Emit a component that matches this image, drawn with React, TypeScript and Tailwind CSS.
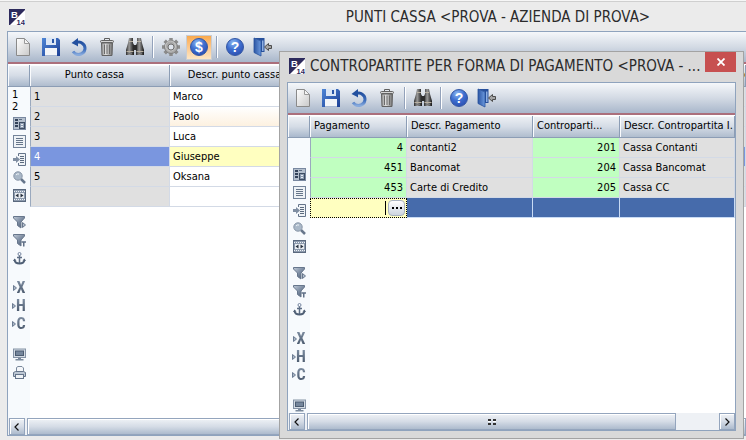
import type { ReactNode } from "react";

const UI_FONT = "font-['DejaVu_Sans_Condensed','DejaVu_Sans',sans-serif]";

function Gradients() {
  return (
    <svg className="absolute size-0" aria-hidden="true">
      <defs>
        <linearGradient id="paper" x1="0" y1="0" x2="1" y2="1">
          <stop offset="0" stopColor="#ffffff" />
          <stop offset="1" stopColor="#c9c9c9" />
        </linearGradient>
        <linearGradient id="blue" x1="0" y1="0" x2="1" y2="1">
          <stop offset="0" stopColor="#4f86d6" />
          <stop offset="1" stopColor="#1c3f95" />
        </linearGradient>
        <linearGradient id="swirl" x1="0" y1="0" x2="0" y2="1">
          <stop offset="0" stopColor="#23509f" />
          <stop offset="0.6" stopColor="#3f6fbd" />
          <stop offset="1" stopColor="#86a9dc" />
        </linearGradient>
        <linearGradient id="leaf" x1="0" y1="0" x2="1" y2="0">
          <stop offset="0" stopColor="#2c56a4" />
          <stop offset="1" stopColor="#6c9ade" />
        </linearGradient>
        <radialGradient id="ball" cx="0.4" cy="0.25" r="0.8">
          <stop offset="0" stopColor="#8db8f2" />
          <stop offset="0.5" stopColor="#3f6fd0" />
          <stop offset="1" stopColor="#2a4db0" />
        </radialGradient>
        <linearGradient id="metal" x1="0" y1="0" x2="1" y2="0">
          <stop offset="0" stopColor="#8f8f8f" />
          <stop offset="0.4" stopColor="#e2e2e2" />
          <stop offset="1" stopColor="#6e6e6e" />
        </linearGradient>
        <linearGradient id="slate" x1="0" y1="0" x2="1" y2="1">
          <stop offset="0" stopColor="#c2ccd9" />
          <stop offset="0.5" stopColor="#7c8ca2" />
          <stop offset="1" stopColor="#44546a" />
        </linearGradient>
        <linearGradient id="lens" x1="0" y1="0" x2="1" y2="0">
          <stop offset="0" stopColor="#2b2b2b" />
          <stop offset="0.4" stopColor="#9a9a9a" />
          <stop offset="1" stopColor="#151515" />
        </linearGradient>
      </defs>
    </svg>
  );
}

function Logo() {
  return (
    <svg viewBox="0 0 16 16" className="size-4 shrink-0" aria-hidden="true">
      <rect width="16" height="16" fill="#fff" />
      <path d="M0 0H16V1L1 16H0Z" fill="#2d2a5c" />
      <text x="2" y="8.5" fontSize="9.5" fontWeight="700" fill="#fff" fontFamily="Liberation Sans, sans-serif">B</text>
      <text x="7.5" y="15.5" fontSize="7.5" fontWeight="700" fill="#2d2a5c" fontFamily="Liberation Sans, sans-serif">14</text>
    </svg>
  );
}

function Big({ children }: { children: ReactNode }) {
  return (
    <svg viewBox="0 0 20 20" className="size-5" aria-hidden="true">
      {children}
    </svg>
  );
}

const NewIcon = () => (
  <Big>
    <path d="M3.500 1.500H11.500L16.500 6.500V18.500H3.500Z" fill="url(#paper)" stroke="#8a8a8a" />
    <path d="M11.500 1.500V6.500H16.500Z" fill="#f4f4f4" stroke="#9a9a9a" />
  </Big>
);
const SaveIcon = () => (
  <Big>
    <path d="M1 1H17L19 3V19H1Z" fill="url(#blue)" />
    <rect x="5" y="1" width="10" height="7" fill="#dbe6f5" />
    <rect x="11" y="2" width="2" height="4" fill="#2a56a8" />
    <rect x="4" y="11" width="12" height="8" fill="#f3f5f8" />
    <path d="M4 18.500H16" stroke="#a9b9d4" />
  </Big>
);
const UndoIcon = () => (
  <Big>
    <path d="M6 6.500Q10 3.500 13.500 6.500A6 6 0 0 1 12 17Q7 18.800 4 14.500" fill="none" stroke="url(#swirl)" strokeWidth="3" />
    <path d="M2.500 6L9 1V9.500L7.500 8.500Z" fill="#23509f" />
  </Big>
);
const TrashIcon = () => (
  <Big>
    <path d="M4.500 6H15.500L15 18.500H5Z" fill="url(#metal)" stroke="#626262" />
    <path d="M7.500 7.500V17M10 7.500V17M12.500 7.500V17" stroke="#6b6b6b" />
    <path d="M7.500 3V1.500H12.500V3" fill="none" stroke="#5f5f5f" />
    <rect x="3.500" y="3.500" width="13" height="2" rx="1" fill="#d5d5d5" stroke="#646464" />
  </Big>
);
const FindIcon = () => (
  <Big>
    <path d="M4 1H8V6L9 8V18H1V13L3 6Z" fill="url(#lens)" />
    <path d="M16 1H12V6L11 8V18H19V13L17 6Z" fill="url(#lens)" />
    <rect x="8" y="8" width="4" height="5" fill="#2d2d2d" />
    <path d="M1.500 14.500H8.500M11.500 14.500H18.500M4 4.500H8M12 4.500H16" stroke="#b9b1a3" />
    <path d="M3 16.500H7M13 16.500H17" stroke="#777" />
  </Big>
);
const GearIcon = () => (
  <Big>
    <g stroke="#8b8b8b" strokeWidth="3.500">
      <path d="M10 1V19M1 10H19M3.700 3.700L16.300 16.300M16.300 3.700L3.700 16.300" />
    </g>
    <circle cx="10" cy="10" r="6.500" fill="#aaaaaa" stroke="#808080" />
    <circle cx="9.500" cy="9" r="5" fill="none" stroke="#c7c7c7" />
    <circle cx="10" cy="10" r="3" fill="#dfe4ec" stroke="#6f6f6f" />
  </Big>
);
const DollarIcon = () => (
  <Big>
    <circle cx="10" cy="10" r="8.500" fill="url(#ball)" stroke="#3558a4" />
    <text x="10" y="15" textAnchor="middle" fontSize="14" fontWeight="700" fill="#fff" fontFamily="Liberation Sans, sans-serif">$</text>
  </Big>
);
const HelpIcon = () => (
  <Big>
    <circle cx="10" cy="10" r="8.500" fill="url(#ball)" stroke="#3558a4" />
    <text x="10" y="15" textAnchor="middle" fontSize="14" fontWeight="700" fill="#fff" fontFamily="Liberation Sans, sans-serif">?</text>
  </Big>
);
const ExitIcon = () => (
  <Big>
    <path d="M1 1H11.500V15H8V4Z" fill="#27509c" />
    <path d="M9 3.500H10.500V14H9Z" fill="#8fb0e2" />
    <path d="M1 1L8 4V19L1 15.500Z" fill="url(#leaf)" stroke="#27509c" strokeWidth="0.800" />
    <path d="M11.500 10L15.500 6.500V8.500H18.500V11.500H15.500V13.500Z" fill="#a4a4a4" stroke="#4c4c4c" />
  </Big>
);

function ToolButton({ label, active, children }: { label: string; active?: boolean; children: ReactNode }) {
  return (
    <button
      type="button"
      aria-label={label}
      className={
        active
          ? "mx-px flex h-[25px] w-[26px] items-center justify-center border border-[#c9ccd2] bg-linear-to-b from-[#f9a94c] to-[#fde6c4]"
          : "flex h-6 w-7 items-center justify-center"
      }
    >
      {children}
    </button>
  );
}

function Separator() {
  return (
    <div className="flex w-2 justify-center">
      <div className="h-[22px] w-0.5 border-l border-[#93a2bb] bg-white" />
    </div>
  );
}

function Toolbar({ full }: { full?: boolean }) {
  return (
    <div className="flex h-8 shrink-0 items-center border-b-2 border-[#ab6f7c] bg-linear-to-b from-[#f5f7fa] via-[#d3dae4] to-[#a9b7cb] pl-px">
      <ToolButton label="Nuovo"><NewIcon /></ToolButton>
      <ToolButton label="Salva"><SaveIcon /></ToolButton>
      <ToolButton label="Annulla"><UndoIcon /></ToolButton>
      <ToolButton label="Elimina"><TrashIcon /></ToolButton>
      {!full && <Separator />}
      <ToolButton label="Cerca"><FindIcon /></ToolButton>
      <Separator />
      {full && (
        <>
          <ToolButton label="Impostazioni"><GearIcon /></ToolButton>
          <ToolButton label="Pagamenti" active><DollarIcon /></ToolButton>
          <Separator />
        </>
      )}
      <ToolButton label="Aiuto"><HelpIcon /></ToolButton>
      <ToolButton label="Esci"><ExitIcon /></ToolButton>
    </div>
  );
}

function SideButton({ label, children }: { label: string; children: ReactNode }) {
  return (
    <button type="button" aria-label={label} className="flex h-[18px] w-full shrink-0 items-center justify-center">
      <svg viewBox="0 0 13 13" className="size-[13px]" aria-hidden="true">
        {children}
      </svg>
    </button>
  );
}

function LetterButton({ letter }: { letter: string }) {
  return (
    <button type="button" className="flex h-[18px] w-full shrink-0 items-center justify-center">
      <svg viewBox="0 0 4 6" className="h-1.5 w-1" aria-hidden="true">
        <path d="M0.500 0.500L3.500 3L0.500 5.500Z" fill="#a9b5c5" stroke="#6c7c92" />
      </svg>
      <span className="bg-linear-to-b from-[#8494a8] to-[#3f4d61] bg-clip-text font-['Roboto_Condensed','Roboto',sans-serif] text-base leading-[18px] font-bold text-transparent">
        {letter}
      </span>
    </button>
  );
}

const funnel = <path d="M0.500 0.500H11.500V2L8 6V12L4.500 9.500V6L0.500 2Z" fill="url(#slate)" stroke="#66768c" />;

function SideBar({ numbers, printer }: { numbers?: boolean; printer?: boolean }) {
  return (
    <div className="flex flex-1 flex-col overflow-hidden bg-[#f7fafd]">
      <div className="h-[27px] shrink-0 px-1 pt-0.5 text-[11px] leading-3">
        {numbers && (
          <>
            <div>1</div>
            <div>2</div>
          </>
        )}
      </div>
      <SideButton label="Struttura">
        <rect x="0.500" y="0.500" width="12" height="12" fill="#b4bfcd" stroke="#7988a0" />
        <path d="M2 2H5V4H2ZM2 5H5V7H2ZM2 8H5V10H2Z" fill="#34435a" />
        <rect x="6.500" y="5.500" width="5" height="6" fill="#8c9bb0" stroke="#3e4d63" />
        <path d="M6 2.500H9" stroke="#5b6a80" />
        <path d="M8 7.500H10M8 9.500H10" stroke="#e8edf3" />
      </SideButton>
      <SideButton label="Elenco">
        <rect x="0.500" y="0.500" width="12" height="12" fill="#eef2f6" stroke="#74849a" />
        <path d="M3 3.500H10M3 5.500H10M3 7.500H10M3 9.500H10" stroke="#66768a" />
      </SideButton>
      <SideButton label="Inserisci">
        <path d="M5.500 3V0.500H12.500V12.500H5.500V10" fill="#eef2f6" stroke="#64748a" />
        <path d="M7 3.500H11M7 5.500H11M7 7.500H11M7 9.500H11" stroke="#5b6a7e" />
        <path d="M0 5H3V3L7 6.500L3 10V8H0Z" fill="#7f8ea2" />
      </SideButton>
      <SideButton label="Zoom">
        <path d="M8 8L12 12" stroke="#66768c" strokeWidth="2.500" />
        <circle cx="5" cy="5" r="4.200" fill="#a9b8c8" stroke="#8795a7" />
        <path d="M3 4Q4 2.500 6 3" fill="none" stroke="#eef3f8" />
      </SideButton>
      <SideButton label="Adatta">
        <rect x="0.500" y="0.500" width="12" height="12" fill="#8d9bae" stroke="#5a697e" />
        <path d="M1 2.500H12M1 10.500H12" stroke="#eef2f6" strokeDasharray="1 1" />
        <rect x="2" y="4" width="9" height="5" fill="#e9edf2" />
        <path d="M2.500 6.500L5.500 4.500V8.500ZM10.500 6.500L7.500 4.500V8.500Z" fill="#27313f" />
      </SideButton>
      <div className="h-[9px] shrink-0" />
      <SideButton label="Filtro dati">
        {funnel}
        <path d="M9.500 6.500L12.500 9L9.500 11.500Z" fill="#b3c0cf" stroke="#66768c" />
      </SideButton>
      <SideButton label="Filtro testo">
        {funnel}
        <path d="M8.500 8H13M10.750 8V12.500" stroke="#5f6f86" strokeWidth="1.500" />
      </SideButton>
      <SideButton label="Blocca">
        <circle cx="6.500" cy="2" r="1.500" fill="none" stroke="#7585a0" />
        <path d="M6.500 3.500V12M4 5.500H9" stroke="#5d6d84" strokeWidth="1.500" />
        <path d="M1.500 8Q2 11.500 6.500 11.500Q11 11.500 11.500 8" fill="none" stroke="#4f5f75" strokeWidth="1.800" />
        <path d="M0 9L1.500 6.500L3.500 8.500ZM13 9L11.500 6.500L9.500 8.500Z" fill="#4f5f75" />
      </SideButton>
      <div className="h-3 shrink-0" />
      <LetterButton letter="X" />
      <LetterButton letter="H" />
      <LetterButton letter="C" />
      <div className="h-3 shrink-0" />
      <SideButton label="Schermo">
        <rect x="0.500" y="1" width="12" height="8.500" fill="#d3dbe4" stroke="#8593a6" />
        <rect x="2.500" y="3" width="8" height="4.500" fill="#75869c" stroke="#4b5b70" />
        <path d="M5 10H8V11H10.500V12.500H2.500V11H5Z" fill="#7a899c" />
      </SideButton>
      {printer && (
        <SideButton label="Stampa">
          <path d="M3.500 6V1.500L5 0.500H9L10.500 2V6" fill="#f4f6f9" stroke="#7a899c" />
          <path d="M0.500 6.500L2.500 5.500H10.500L12.500 6.500V10.500H0.500Z" fill="#bcc7d4" stroke="#64748a" />
          <rect x="2.500" y="8.500" width="8" height="4" fill="#eef2f6" stroke="#64748a" />
        </SideButton>
      )}
    </div>
  );
}

const headCell =
  "h-[22px] overflow-hidden border-r border-b border-[#8c9db5] bg-linear-to-b from-[#eef1f5] via-[#d5dce6] to-[#b0bdce] p-0 font-normal whitespace-nowrap shadow-[inset_1px_1px_0_#fafbfd]";
const cell = "h-5 overflow-hidden border-r border-b border-[#d3dae6] p-0 px-[3px] leading-[19px] whitespace-nowrap";
const firstCell = "border-l border-l-[#9aa9be]";

function Corner() {
  return (
    <div className="h-[22px] w-full shrink-0 border-r border-b border-[#8c9db5] bg-linear-to-b from-[#eef1f5] via-[#d5dce6] to-[#a9b8cc] shadow-[inset_1px_1px_0_#fafbfd]" />
  );
}

function ScrollBar({ end }: { end?: boolean }) {
  const face = "border border-[#94a5bd] bg-linear-to-b from-[#eff2f6] via-[#d5dce6] to-[#adbbcd] shadow-[inset_1px_1px_0_#fff]";
  return (
    <div className="flex h-[17px] shrink-0 gap-0.5 bg-[#eef1f5] pl-px">
      <button type="button" aria-label="Scorri a sinistra" className={`flex w-4 items-center justify-center ${face}`}>
        <svg viewBox="0 0 6 8" className="h-2 w-1.5" aria-hidden="true">
          <path d="M4.500 0.500L1 4L4.500 7.500" fill="none" stroke="#111" strokeWidth="1.200" />
        </svg>
      </button>
      <div className={`flex flex-1 items-center justify-center ${face}`}>
        {end && (
          <svg viewBox="0 0 8 6" className="h-1.5 w-2" aria-hidden="true">
            <path d="M0 1H3M5 1H8M0 5H3M5 5H8" stroke="#333" strokeWidth="2" />
            <path d="M0 2.500H3M5 2.500H8" stroke="#fff" />
          </svg>
        )}
      </div>
      {end && (
        <>
          <div className="w-[39px]" />
          <button type="button" aria-label="Scorri a destra" className={`flex w-4 items-center justify-center ${face}`}>
            <svg viewBox="0 0 6 8" className="h-2 w-1.5" aria-hidden="true">
              <path d="M1.500 0.500L5 4L1.500 7.500" fill="none" stroke="#111" strokeWidth="1.200" />
            </svg>
          </button>
        </>
      )}
    </div>
  );
}

const points = [
  { id: "1", name: "Marco", idTone: "bg-[#e0e0e0]", nameTone: "bg-white" },
  { id: "2", name: "Paolo", idTone: "bg-[#e0e0e0]", nameTone: "bg-linear-to-b from-white to-[#fdf1e0]" },
  { id: "3", name: "Luca", idTone: "bg-[#e0e0e0]", nameTone: "bg-white" },
  { id: "4", name: "Giuseppe", idTone: "bg-[#7a96df] text-white", nameTone: "bg-[#ffffc0]" },
  { id: "5", name: "Oksana", idTone: "bg-[#e0e0e0]", nameTone: "bg-white" },
  { id: "", name: "", idTone: "bg-[#e0e0e0]", nameTone: "bg-white" },
];

function MainWindow() {
  return (
    <main className="flex h-full flex-col pb-1">
      <div className="h-px shrink-0 bg-[#f6f6f6]" />
      <header className="flex h-[30px] shrink-0 items-center border-t border-[#cfcfcf] pl-[9px]">
        <Logo />
        <h1 className="flex-1 pl-[225px] text-center text-[15px] leading-5 whitespace-nowrap text-[#2b2b2b]">
          PUNTI CASSA &lt;PROVA - AZIENDA DI PROVA&gt;
        </h1>
      </header>
      <div className="ml-[7px] flex min-h-0 flex-1 flex-col border border-r-0 border-[#8fa3bd] bg-white">
        <Toolbar full />
        <div className="flex min-h-0 flex-1 pt-px">
          <div className="flex w-[22px] shrink-0 flex-col">
            <Corner />
            <SideBar numbers printer />
          </div>
          <div className="min-w-0 flex-1 overflow-hidden">
            <table className="w-full table-fixed border-separate border-spacing-0">
              <colgroup>
                <col className="w-[140px]" />
                <col className="w-[130px]" />
                <col className="w-[440px]" />
                <col />
              </colgroup>
              <thead>
                <tr>
                  <th className={`${headCell} pr-2.5`}>Punto cassa</th>
                  <th className={headCell}>Descr. punto cassa</th>
                  <th className={headCell} />
                  <th className={`${headCell} pl-1 text-left`}>c</th>
                </tr>
              </thead>
              <tbody>
                {points.map((p, i) => (
                  <tr key={i}>
                    <td className={`${cell} ${firstCell} ${p.idTone}`}>{p.id}</td>
                    <td className={`${cell} ${p.nameTone}`}>{p.name}</td>
                    <td className={`${cell} ${p.idTone}`} />
                    <td className={`${cell} ${p.idTone}`} />
                  </tr>
                ))}
              </tbody>
            </table>
          </div>
        </div>
        <ScrollBar />
      </div>
    </main>
  );
}

const payments = [
  { code: "4", name: "contanti2", account: "201", accountName: "Cassa Contanti" },
  { code: "451", name: "Bancomat", account: "204", accountName: "Cassa Bancomat" },
  { code: "453", name: "Carte di Credito", account: "205", accountName: "Cassa CC" },
];

function PaymentDialog() {
  const selected = "h-5 border-r border-b border-[#c9dbf5] bg-[#466bab] p-0";
  return (
    <section
      role="dialog"
      aria-labelledby="dialog-title"
      className="absolute top-[51px] right-0.5 bottom-px left-[279px] flex flex-col border border-[#a3a3a3] bg-[#d9d9d9] px-[7px] pb-[7px]"
    >
      <header className="flex h-[30px] shrink-0 items-start pl-0.5">
        <div className="pt-1.5">
          <Logo />
        </div>
        <h2
          id="dialog-title"
          className="min-w-0 flex-1 pt-1 pl-[5px] text-[15px] leading-5 whitespace-nowrap text-[#2b2b2b]"
        >
          CONTROPARTITE PER FORMA DI PAGAMENTO &lt;PROVA - ...
        </h2>
        <button type="button" aria-label="Chiudi" className="flex h-5 w-[31px] shrink-0 items-center justify-center bg-[#c75050]">
          <svg viewBox="0 0 8 8" className="size-2" aria-hidden="true">
            <path d="M0.500 0.500L7.500 7.500M7.500 0.500L0.500 7.500" stroke="#fff" strokeWidth="1.800" />
          </svg>
        </button>
      </header>
      <div className="flex min-h-0 flex-1 flex-col border border-[#8fa3bd] bg-white">
        <Toolbar />
        <div className="flex min-h-0 flex-1 pt-px">
          <div className="flex w-[22px] shrink-0 flex-col overflow-hidden">
            <Corner />
            <SideBar />
          </div>
          <div className="min-w-0 flex-1 overflow-hidden">
            <table className="w-full table-fixed border-separate border-spacing-0">
              <colgroup>
                <col className="w-[97px]" />
                <col className="w-[126px]" />
                <col className="w-[87px]" />
                <col />
              </colgroup>
              <thead>
                <tr className="text-left">
                  <th className={`${headCell} pl-1`}>Pagamento</th>
                  <th className={`${headCell} pl-1`}>Descr. Pagamento</th>
                  <th className={`${headCell} pl-1`}>Controparti...</th>
                  <th className={`${headCell} pl-1`}>Descr. Contropartita I.</th>
                </tr>
              </thead>
              <tbody>
                {payments.map((p) => (
                  <tr key={p.code}>
                    <td className={`${cell} ${firstCell} bg-[#c0ffc0] text-right`}>{p.code}</td>
                    <td className={`${cell} bg-[#e0e0e0]`}>{p.name}</td>
                    <td className={`${cell} bg-[#c0ffc0] text-right`}>{p.account}</td>
                    <td className={`${cell} bg-[#e0e0e0]`}>{p.accountName}</td>
                  </tr>
                ))}
                <tr>
                  <td className="h-5 bg-[#ffffc0] p-0">
                    <div className="flex h-5 items-center border border-dotted border-black pr-px">
                      <input aria-label="Pagamento" className="h-4 min-w-0 flex-1 text-right outline-none" />
                      <span className="mr-0.5 h-3.5 w-px bg-black" />
                      <button
                        type="button"
                        aria-label="Sfoglia"
                        className="flex h-4 w-[17px] items-center justify-center gap-0.5 rounded-sm border border-[#a9b3c1] bg-linear-to-b from-white to-[#cdd5e0]"
                      >
                        <span className="size-0.5 bg-black" />
                        <span className="size-0.5 bg-black" />
                        <span className="size-0.5 bg-black" />
                      </button>
                    </div>
                  </td>
                  <td className={selected} />
                  <td className={selected} />
                  <td className={selected} />
                </tr>
              </tbody>
            </table>
          </div>
        </div>
        <ScrollBar end />
      </div>
    </section>
  );
}

export default function App() {
  return (
    <div className={`relative h-screen min-h-[440px] overflow-hidden bg-[#ebebeb] text-[11px] text-black ${UI_FONT}`}>
      <Gradients />
      <MainWindow />
      <PaymentDialog />
    </div>
  );
}
